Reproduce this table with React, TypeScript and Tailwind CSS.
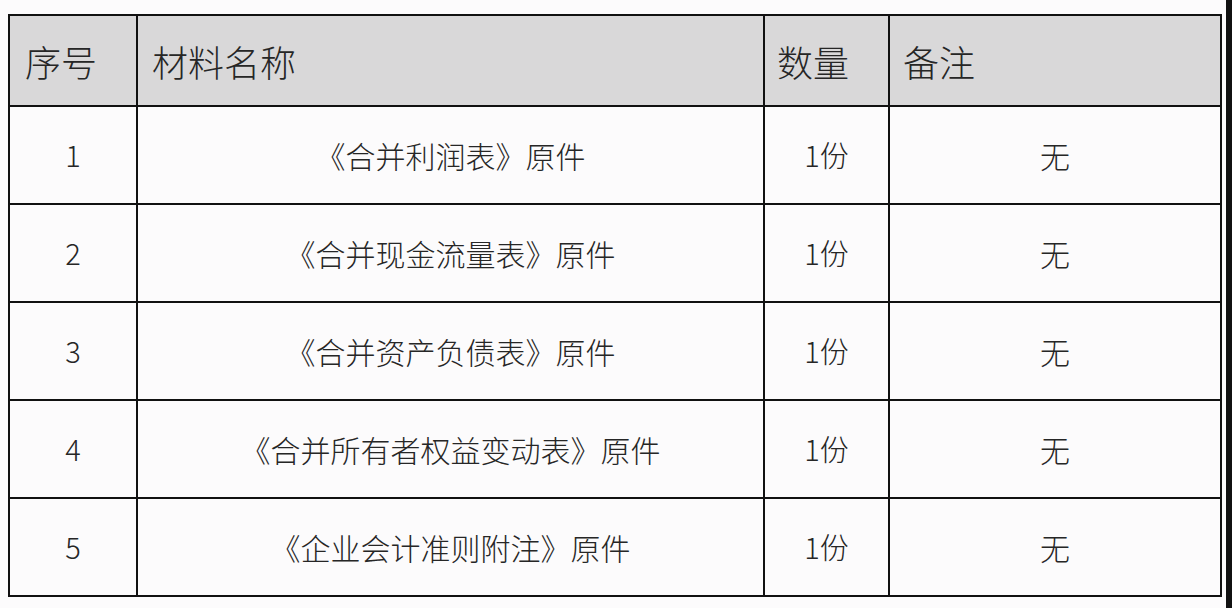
import React from 'react';

const rows = [
	{ no: '1', name: '《合并利润表》原件', qty: '1份', note: '无' },
	{ no: '2', name: '《合并现金流量表》原件', qty: '1份', note: '无' },
	{ no: '3', name: '《合并资产负债表》原件', qty: '1份', note: '无' },
	{ no: '4', name: '《合并所有者权益变动表》原件', qty: '1份', note: '无' },
	{ no: '5', name: '《企业会计准则附注》原件', qty: '1份', note: '无' },
];

const font = { fontFamily: '"Noto Sans CJK SC", "Noto Sans", sans-serif' };

const App = () => {
	return (
		<div className="w-[1232px] h-[608px] flex bg-[#fcfbfc] text-[#262626] font-light" style={font}>
			<div className="flex-1 pl-[8px] pt-[14px]">
				<div className="grid grid-cols-[128px_627px_125px_332px] border-t-2 border-l-2 border-[#111] w-[1214px]">
					{/* header */}
					<div className="h-[91px] bg-[#d9d8d9] border-r-2 border-b-2 border-[#111] flex items-center pl-[15px] text-[36px]">
						序号
					</div>
					<div className="h-[91px] bg-[#d9d8d9] border-r-2 border-b-2 border-[#111] flex items-center pl-[14px] text-[36px]">
						材料名称
					</div>
					<div className="h-[91px] bg-[#d9d8d9] border-r-2 border-b-2 border-[#111] flex items-center pl-[12px] text-[36px]">
						数量
					</div>
					<div className="h-[91px] bg-[#d9d8d9] border-r-2 border-b-2 border-[#111] flex items-center pl-[13px] text-[36px]">
						备注
					</div>

					{rows.map((r, i) => (
						<React.Fragment key={i}>
							<div className="h-[98px] border-r-2 border-b-2 border-[#111] flex items-center justify-center text-[29px]">
								{r.no}
							</div>
							<div className="h-[98px] border-r-2 border-b-2 border-[#111] flex items-center justify-center text-[30px]">
								{r.name}
							</div>
							<div className="h-[98px] border-r-2 border-b-2 border-[#111] flex items-center justify-center text-[29px]">
								{r.qty}
							</div>
							<div className="h-[98px] border-r-2 border-b-2 border-[#111] flex items-center justify-center text-[30px]">
								{r.note}
							</div>
						</React.Fragment>
					))}
				</div>
			</div>
			<div className="w-[6px] bg-[#111]"></div>
		</div>
	);
};

export default App;
